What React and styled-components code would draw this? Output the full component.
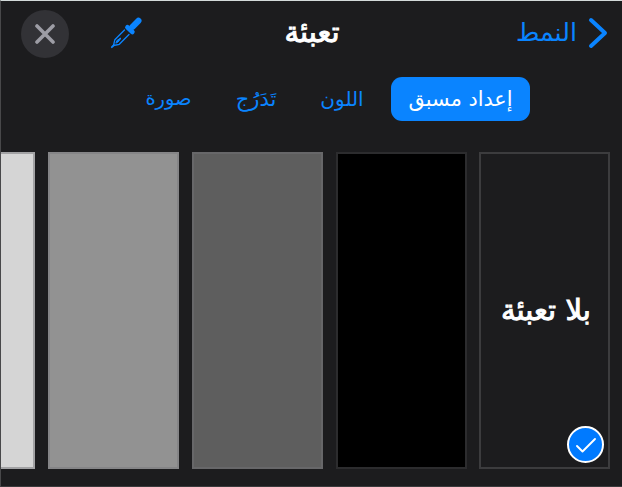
import React, {useState} from 'react';
import styled, {createGlobalStyle} from 'styled-components';


const GlobalStyle = createGlobalStyle`
    body {
        margin: 0;
        background-color: #1c1c1e;
    }

    * {
        box-sizing: border-box;
    }
`

const Panel = styled.main`
    width: 622px;
    height: 487px;
    overflow: hidden;
    background-color: #1c1c1e;
    border-top: 1px solid #d3dada;
    border-left: 1px solid #48484a;
    border-bottom: 1px solid #3a3a3c;
    font-family: "DejaVu Sans", sans-serif;
    color: #fff;
`

const Header = styled.header`
    height: 64px;
    padding: 0 14px 0 20px;
    display: grid;
    grid-template-columns: 205px 1fr 205px;
    align-items: center;
`

const Button = styled.button`
    padding: 0;
    border: 0;
    background: none;
    color: #0a84ff;
    font-family: inherit;
    display: flex;
    align-items: center;
    cursor: pointer;
`

const BackButton = styled(Button)`
    gap: 11px;
    font-size: 25.3px;
    line-height: 32px;
`

const Title = styled.h1`
    margin: 0;
    padding: 0 5px 2px 0;
    font-size: 29px;
    line-height: 32px;
    font-weight: normal;
    -webkit-text-stroke: 1px currentColor;
    text-align: center;
    white-space: nowrap;
`

const Actions = styled.div`
    display: flex;
    justify-content: flex-end;
    align-items: center;
    gap: 41px;
`

const CloseButton = styled(Button)`
    width: 48px;
    height: 48px;
    margin-top: 2px;
    border-radius: 50%;
    justify-content: center;
    background-color: #323236;
    color: #9d9da5;
`

const Tabs = styled.nav`
    height: 44px;
    margin-top: 12px;
    padding-right: 92px;
    display: flex;
`

const Tab = styled(Button)`
    width: ${props => props.$width}px;
    height: 44px;
    justify-content: center;
    border-radius: 11px;
    font-size: ${props => props.$size}px;
    line-height: 30px;
    white-space: nowrap;
    background-color: ${props => props.$active ? "#0a84ff" : "transparent"};
    color: ${props => props.$active ? "#fff" : "#0a84ff"};
`

const Swatches = styled.div`
    margin-top: 31px;
    padding-right: 11.6px;
    display: flex;
    gap: 12.8px;
`

const Swatch = styled.button`
    position: relative;
    flex: none;
    width: 131px;
    height: 317px;
    padding: 0 0 2px 2px;
    border: 2px solid ${props => props.$border};
    background-color: ${props => props.$fill};
    color: #fff;
    font-family: inherit;
    font-size: 29px;
    -webkit-text-stroke: 1px currentColor;
    white-space: nowrap;
    cursor: pointer;
`

const Badge = styled.span`
    position: absolute;
    right: 4px;
    bottom: 4px;
    width: 37px;
    height: 37px;
    border: 2px solid #fff;
    border-radius: 50%;
    background-color: #007aff;
    display: flex;
    justify-content: center;
    align-items: center;
`

const tabs = [
    {name: "إعداد مسبق", width: 139, size: 20.8},
    {name: "اللون", width: 98, size: 20},
    {name: "تَدَرُج", width: 74, size: 21},
    {name: "صورة", width: 101, size: 19.5},
];

const swatches = [
    {name: "بلا تعبئة", fill: "#1c1c1e", border: "#3c3c3e"},
    {fill: "#000000", border: "#2c2c2e"},
    {fill: "#5e5e5e", border: "#676769"},
    {fill: "#929292", border: "#858587"},
    {fill: "#d5d5d5", border: "#a2a2a4"},
];

const Chevron = () =>
    <svg width="20" height="32" viewBox="0 0 20 32" fill="none" stroke="currentColor" strokeWidth="4" strokeLinecap="round" strokeLinejoin="round">
        <path d="M3 3 L17 16 L3 29" />
    </svg>

const Cross = () =>
    <svg width="20" height="20" viewBox="0 0 20 20" stroke="currentColor" strokeWidth="3.6" strokeLinecap="round">
        <path d="M2 2 L18 18 M18 2 L2 18" />
    </svg>

const Eyedropper = () =>
    <svg width="32" height="32" viewBox="0 0 32 32" fill="none" stroke="currentColor" strokeLinecap="round" strokeLinejoin="round">
        <path d="M22.5 9.8 L28.4 3.8" strokeWidth="6.2" />
        <path d="M17.4 10.3 L22.4 15" strokeWidth="4.6" />
        <path d="M14.5 13 L4.8 22.8 L3.5 28.5 L9.3 27.3 L19 17.5" strokeWidth="1.3" />
        <path d="M1.8 30.2 L3.5 28.5" strokeWidth="1.8" />
        <path d="M6 25.8 L7 23.5 L10.6 21 L10.4 22.1 L8 25 Z" strokeWidth="1" fill="currentColor" />
    </svg>

const Check = () =>
    <svg width="22" height="18" viewBox="0 0 22 18" fill="none" stroke="#fff" strokeWidth="1.9" strokeLinecap="round" strokeLinejoin="round">
        <path d="M2 10 L7.5 15.5 L20 3" />
    </svg>

const App = () =>{
    let [activeTab, setActiveTab] = useState(0);
    let [selected, setSelected] = useState(0);

    return(
        <Panel dir="rtl">
            <GlobalStyle />
            <Header>
                <BackButton><Chevron />النمط</BackButton>
                <Title>تعبئة</Title>
                <Actions>
                    <Button aria-label="قطارة"><Eyedropper /></Button>
                    <CloseButton aria-label="إغلاق"><Cross /></CloseButton>
                </Actions>
            </Header>

            <Tabs>
                {
                    tabs.map((tab, i) =>
                        <Tab key={tab.name} $width={tab.width} $size={tab.size} $active={i === activeTab} onClick={()=>setActiveTab(i)}>{tab.name}</Tab>
                    )
                }
            </Tabs>

            <Swatches>
                {
                    swatches.map((swatch, i) =>
                        <Swatch key={swatch.fill} $fill={swatch.fill} $border={swatch.border} onClick={()=>setSelected(i)}>
                            {swatch.name}
                            {i === selected && <Badge><Check /></Badge>}
                        </Swatch>
                    )
                }
            </Swatches>
        </Panel>
    )
}

export default App;
